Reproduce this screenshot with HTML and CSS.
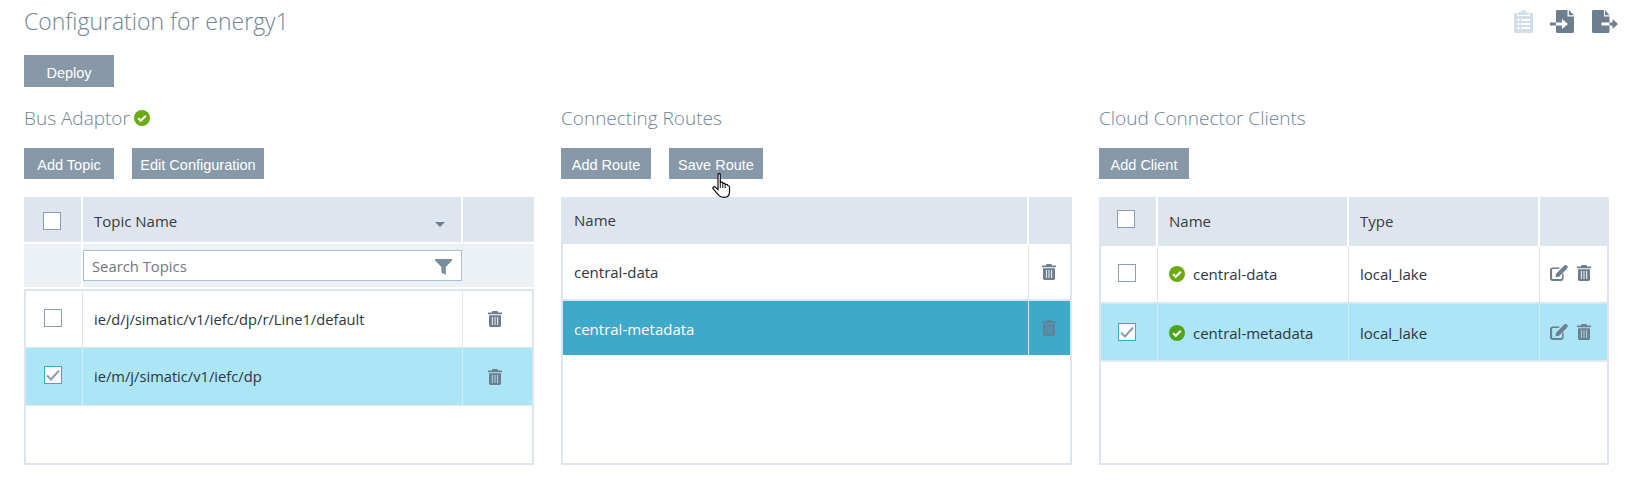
FILE: index.html
```html
<!DOCTYPE html>
<html lang="en">
<head>
<meta charset="utf-8">
<title>Configuration for energy1</title>
<link rel="stylesheet" href="styles.css">
</head>
<body>
<svg class="defs" width="0" height="0" aria-hidden="true">
  <symbol id="trash" viewBox="0 0 14 16">
    <path fill-rule="evenodd" d="M4.6 0h4.8l.8 1.500H14V3.200H0V1.500h3.800zM1 4.200h12v10.400c0 .8-.6 1.400-1.400 1.400H2.400C1.600 16 1 15.400 1 14.600zM3.900 6v8h.9V6zM6.550 6v8h.9V6zM9.200 6v8h.9V6z"/>
  </symbol>
  <symbol id="edit" viewBox="0 0 18 16">
    <path d="M2.500 2.500H10L8.500 4H3a.9.9 0 0 0-.9.900v8.200c0 .5.400.9.900.9h8.200c.5 0 .9-.4.900-.9V9.500l1.500-1.500v5.500c0 1.400-1.100 2.500-2.500 2.500H2.500C1.100 16 0 14.900 0 13.500V5c0-1.400 1.100-2.500 2.500-2.500z"/>
    <path d="M14 .8l3 3-7.900 7.900-3.600.6.600-3.600zM15 0l.8-.0c.3 0 .5.100.7.300l1.200 1.200c.3.300.3.800 0 1.100l-.8.800-3-3z"/>
  </symbol>
  <symbol id="ok" viewBox="0 0 16 16">
    <circle cx="8" cy="8" r="8"/>
    <path d="M4.200 8.200l2.600 2.600 5-5" fill="none" stroke="#fff" stroke-width="2.200"/>
  </symbol>
  <symbol id="funnel" viewBox="0 0 17 16">
    <path d="M0 0h17v1.500L10.800 8v8l-4.400-2.500V8L0 1.500z"/>
  </symbol>
  <symbol id="tick" viewBox="0 0 14 12">
    <path d="M1 6.500l4 4L13 1.500" fill="none" stroke-width="2"/>
  </symbol>
</svg>

<header class="top">
  <h1 class="title">Configuration for energy1</h1>
  <div class="tools">
    <svg class="tool tool-clip" viewBox="0 0 19 23" aria-label="Report">
      <path fill-rule="evenodd" d="M6.500 2.500C6.800 1 8 0 9.500 0s2.700 1 3 2.500H15V5H4V2.500zM1.500 3H3v3h13V3h1.500C18.400 3 19 3.600 19 4.500v17c0 .9-.6 1.500-1.500 1.500h-16C.6 23 0 22.400 0 21.500v-17C0 3.600.6 3 1.500 3zM3.500 9v2h2V9zM7 9v2h9V9zM3.500 13v2h2v-2zM7 13v2h9v-2zM3.500 17v2h2v-2zM7 17v2h9v-2z"/>
    </svg>
    <svg class="tool tool-in" viewBox="0 0 24 23" aria-label="Import">
      <path fill-rule="evenodd" d="M7 0h10.500v6.500H24v15c0 .9-.6 1.500-1.500 1.500h-15c-.9 0-1.500-.6-1.500-1.500v-6h6V19l6-5-6-5v3.500H6v-11C6 .6 6.400 0 7 0z"/>
      <path d="M18.800 0L24 5.200h-5.200z"/>
      <path d="M0 12.500h6v3H0z"/>
    </svg>
    <svg class="tool tool-out" viewBox="0 0 26 23" aria-label="Export">
      <path d="M1.500 0H12v6.500h5.500v6H9.500v3h8v6c0 .9-.6 1.500-1.500 1.500H1.500C.6 23 0 22.400 0 21.500v-20C0 .6.6 0 1.500 0z"/>
      <path d="M13 0l4.500 5.200H13z"/>
      <path d="M17.500 12.500h3V9l5.500 5-5.500 5v-3.500h-3z"/>
    </svg>
  </div>
</header>

<button class="btn btn-deploy">Deploy</button>

<main class="columns">
  <section class="col">
    <h2 class="heading">Bus Adaptor <svg class="ok ok-head"><use href="#ok"/></svg></h2>
    <div class="actions">
      <button class="btn btn-fixed">Add Topic</button>
      <button class="btn btn-edit">Edit Configuration</button>
    </div>
    <div class="tbl tbl-topics">
      <div class="head">
        <div class="hc center"><span class="cb"></span></div>
        <div class="hc between"><span>Topic Name</span><span class="caret"></span></div>
        <div class="hc last"></div>
      </div>
      <div class="filter">
        <div class="fc"></div>
        <div class="fc search">
          <input class="search-input" type="text" placeholder="Search Topics">
          <svg class="funnel"><use href="#funnel"/></svg>
        </div>
        <div class="fc"></div>
      </div>
      <div class="body boxed">
        <div class="row">
          <div class="c center"><span class="cb"></span></div>
          <div class="c">ie/d/j/simatic/v1/iefc/dp/r/Line1/default</div>
          <div class="c center last"><svg class="trash"><use href="#trash"/></svg></div>
        </div>
        <div class="row sel">
          <div class="c center"><span class="cb on"><svg class="tick"><use href="#tick"/></svg></span></div>
          <div class="c">ie/m/j/simatic/v1/iefc/dp</div>
          <div class="c center last"><svg class="trash"><use href="#trash"/></svg></div>
        </div>
      </div>
    </div>
  </section>

  <section class="col">
    <h2 class="heading">Connecting Routes</h2>
    <div class="actions">
      <button class="btn btn-fixed">Add Route</button>
      <button class="btn btn-save">Save Route
        <svg class="cursor" viewBox="0 0 20 25">
          <path d="M6 1.500c0-1.300 2.300-1.300 2.300 0V10c0-1 2.500-1.200 2.500.2v.8c0-1 2.400-1.200 2.400.2v1c0-1 2.500-1.100 2.500.3 .6 0 1.800.3 1.800 1.500v5c0 3-2 5.300-5.500 5.300-3 0-4.800-1-6-3L1.200 16c-1-1.600.8-3 2.200-1.800L6 16.500z" fill="#fff" stroke="#111" stroke-width="1.200"/>
          <path d="M8.300 10v5M10.800 11v4M13.200 12.200v3" fill="none" stroke="#111" stroke-width="1"/>
        </svg>
      </button>
    </div>
    <div class="tbl tbl-routes">
      <div class="head">
        <div class="hc">Name</div>
        <div class="hc last"></div>
      </div>
      <div class="body">
        <div class="row">
          <div class="c">central-data</div>
          <div class="c center last"><svg class="trash"><use href="#trash"/></svg></div>
        </div>
        <div class="row active">
          <div class="c">central-metadata</div>
          <div class="c center last"><svg class="trash"><use href="#trash"/></svg></div>
        </div>
      </div>
    </div>
  </section>

  <section class="col">
    <h2 class="heading">Cloud Connector Clients</h2>
    <div class="actions">
      <button class="btn btn-fixed">Add Client</button>
    </div>
    <div class="tbl tbl-clients">
      <div class="head">
        <div class="hc center"><span class="cb"></span></div>
        <div class="hc">Name</div>
        <div class="hc">Type</div>
        <div class="hc last"></div>
      </div>
      <div class="body">
        <div class="row">
          <div class="c center"><span class="cb"></span></div>
          <div class="c named"><svg class="ok"><use href="#ok"/></svg>central-data</div>
          <div class="c">local_lake</div>
          <div class="c ops last"><svg class="edit"><use href="#edit"/></svg><svg class="trash"><use href="#trash"/></svg></div>
        </div>
        <div class="row sel">
          <div class="c center"><span class="cb on"><svg class="tick"><use href="#tick"/></svg></span></div>
          <div class="c named"><svg class="ok"><use href="#ok"/></svg>central-metadata</div>
          <div class="c">local_lake</div>
          <div class="c ops last"><svg class="edit"><use href="#edit"/></svg><svg class="trash"><use href="#trash"/></svg></div>
        </div>
      </div>
    </div>
  </section>
</main>
</body>
</html>
```

FILE: styles.css
```css
* { box-sizing: border-box; }

html, body { margin: 0; height: 100%; }

body {
  padding: 0 24px;
  background: #fff;
  color: #2d3640;
  font-family: "Open Sans", "Noto Sans", sans-serif;
  font-size: 15px;
  overflow: hidden;
}

.defs { position: absolute; }

.top {
  display: flex;
  justify-content: space-between;
  height: 55px;
  margin-right: 8px;
}

.title {
  margin: 5px 0 0;
  font-size: 23px;
  line-height: 32px;
  font-weight: 300;
  color: #6f8495;
}

.tools {
  display: flex;
  align-items: flex-start;
  padding-top: 10px;
}

.tool { height: 23px; fill: #6d7f8e; }
.tool-clip { width: 19px; fill: #d3dee6; margin-right: 17px; }
.tool-in { width: 24px; margin-right: 18px; }
.tool-out { width: 26px; }

.btn {
  display: block;
  height: 31px;
  padding: 3px 0 0;
  border: 0;
  border-radius: 0;
  background: #8799a9;
  color: #fff;
  font-family: "Liberation Sans", Arial, sans-serif;
  font-size: 14.500px;
  position: relative;
}

.btn-deploy { width: 90px; height: 32px; }
.btn-fixed { width: 90px; }
.btn-edit { width: 132px; }
.btn-save { width: 94px; }

.cursor {
  position: absolute;
  left: 43px;
  top: 25px;
  width: 20px;
  height: 25px;
}

.columns {
  display: grid;
  grid-template-columns: 510px 511px 510px;
  column-gap: 27px;
  margin-top: 16px;
}

.heading {
  display: flex;
  align-items: center;
  gap: 4px;
  margin: 0 0 15px;
  height: 30px;
  font-size: 19px;
  font-weight: 300;
  color: #6f8495;
}

.actions {
  display: flex;
  gap: 18px;
  margin-bottom: 18px;
}

.ok { width: 16px; height: 16px; flex: none; fill: #6aaa12; }
.sel .ok { fill: #4ea51a; }

.tbl {
  display: flex;
  flex-direction: column;
  height: 268px;
}

.head, .row, .filter { display: grid; }

.head {
  background: #dfe5ee;
  flex: none;
}

.hc {
  display: flex;
  align-items: center;
  padding: 3px 11px 0;
  border-right: 2px solid #fff;
  color: #333c46;
}

.hc.last, .c.last { border-right: 0; }
.center { justify-content: center; padding-left: 0 !important; padding-right: 2px !important; }
.between { justify-content: space-between; padding-right: 16px; }

.caret {
  width: 0;
  height: 0;
  margin-top: 6px;
  border: 5px solid transparent;
  border-top-color: #6d7f8e;
  border-bottom-width: 0;
}

.filter {
  flex: none;
  height: 43px;
  margin-top: 2px;
  background: #ecf1f5;
}

.fc { border-right: 2px solid #fff; }
.fc:last-child { border-right: 0; }

.search {
  position: relative;
  padding: 6px 0;
  border-right: 0;
  margin-right: 1px;
}

.search-input {
  display: block;
  width: 100%;
  height: 31px;
  margin: 0;
  padding: 0 30px 0 8px;
  border: 1px solid #a9c3cd;
  border-radius: 0;
  background: #fff;
  font-family: inherit;
  font-size: 14.800px;
  outline: 0;
}

.search-input::placeholder { color: #6f7780; opacity: 1; }

.funnel {
  position: absolute;
  right: 10px;
  top: 15px;
  width: 17px;
  height: 16px;
  fill: #7a8e9e;
}

.body {
  flex: 1;
  border: 2px solid #dfe5ee;
  border-top: 0;
  background: #fff;
}

.boxed {
  margin-top: 2px;
  border-top: 2px solid #dfe5ee;
}

.c {
  display: flex;
  align-items: center;
  padding: 0 11px;
  border-right: 1px solid #dfe5ee;
  color: #2d3640;
}

.row { border-bottom: 2px solid #dfe5ee; }

.sel { background: #ace5f6; border-bottom-color: #e3e9f0; }
.sel .c { border-right-color: #d6edf5; }

.active { background: #3fa9c9; border-bottom: 0; }
.active .c { color: #fff; border-right-color: #d9edf4; }

.cb {
  display: flex;
  align-items: center;
  justify-content: center;
  width: 18px;
  height: 18px;
  border: 1px solid #8b9fb0;
  background: #fff;
}

.cb.on { border-color: #3fa9c9; }
.tick { width: 14px; height: 12px; stroke: #8b9fb0; }

.trash { width: 14px; height: 16px; fill: #6d7f8e; }
.edit { width: 18px; height: 16px; fill: #6d7f8e; }

.active .trash { fill: #5f8299; }

/* Bus Adaptor table */
.tbl-topics .head { grid-template-columns: 59px 380px 71px; height: 45px; }
.tbl-topics .filter { grid-template-columns: 59px 380px 71px; }
.tbl-topics .row { grid-template-columns: 57px 380px 69px; height: 57px; border-bottom-width: 1px; font-size: 14.700px; }
.tbl-topics .row.sel { height: 58px; }
.tbl-topics .row.sel .c:nth-child(2) { padding-bottom: 2px; }
.tbl-topics .c.center .cb { margin-bottom: 3px; }
.tbl-topics .c.last { padding-right: 6px !important; }

/* Routes table */
.tbl-routes .head { grid-template-columns: 468px 43px; height: 47px; }
.tbl-routes .row { grid-template-columns: 466px 41px; height: 57px; }
.tbl-routes .row.active { height: 54px; }
.tbl-routes .row.active .c:first-child { padding-top: 1px; }
.tbl-routes .hc:first-child { padding: 0 13px 2px; }

/* Clients table */
.tbl-clients .head { grid-template-columns: 59px 191px 191px 69px; height: 49px; }
.tbl-clients .row { grid-template-columns: 57px 191px 191px 67px; height: 58px; }
.tbl-clients .row.sel .c { padding-top: 2px; }
.tbl-clients .hc { padding-top: 0; padding-bottom: 2px; }
.tbl-clients .center { padding-right: 4px !important; padding-bottom: 6px; }

.named { gap: 8px; }
.ops { gap: 9px; padding: 0 0 2px 10px; }
.tbl-clients .c.center { padding-bottom: 2px; }
```
